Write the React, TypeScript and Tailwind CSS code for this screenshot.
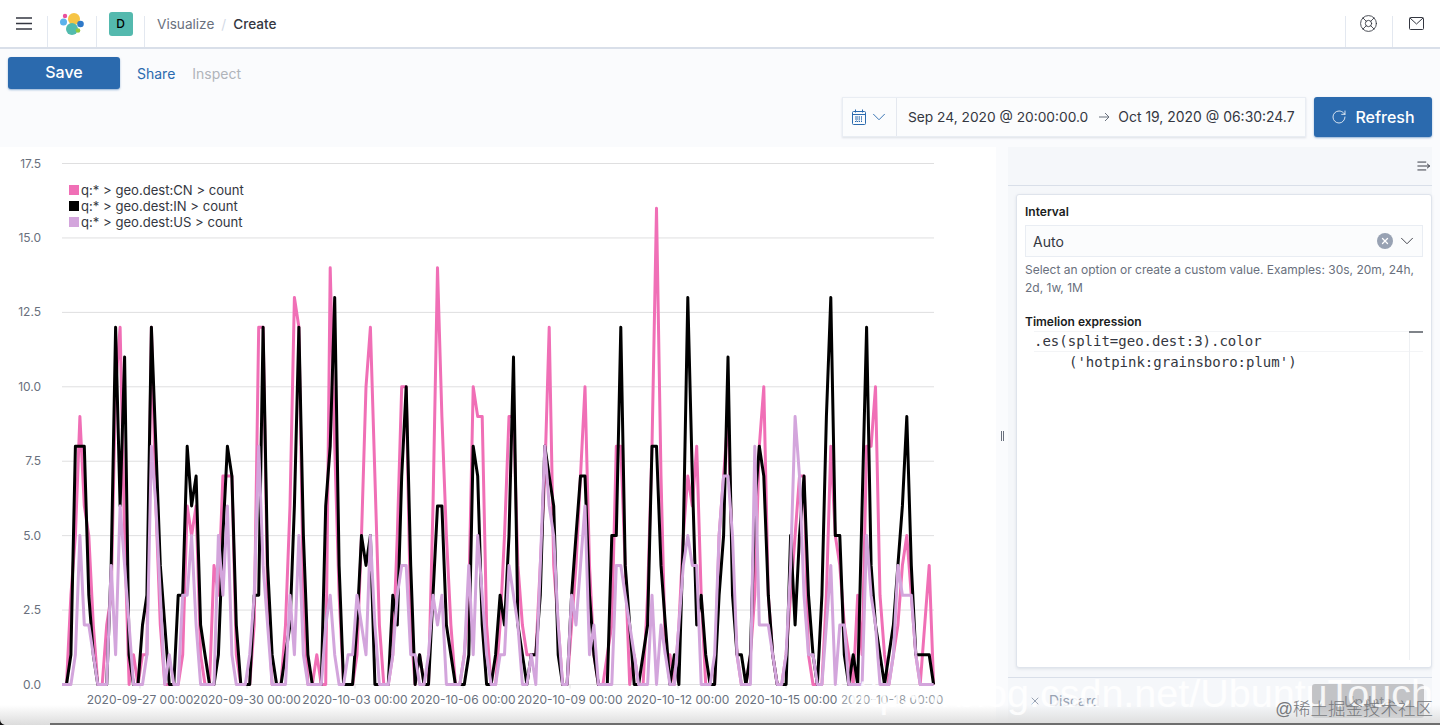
import React from 'react';
import { ChevronDown, LifeBuoy, RotateCw, X } from 'lucide-react';

const cn = [0,0,3,5,9,6,5,2,0,0, 2,3,10,12,5,0,1,0,1,1, 12,6,2,0,0,0,0,1,6,5, 6,1,0,0,4,3,7,7,7,1, 0,0,0,2,12,12,3,0,0,0, 2,6,13,12,3,0,0,1,0,0, 14,8,3,0,0,0,1,5,10,12, 7,2,0,0,1,5,10,10,2,0, 1,0,0,6,14,9,5,2,0,0, 1,3,10,9,9,2,0,0,2,5, 9,9,4,2,1,1,1,4,7,12, 4,2,0,0,2,4,7,10,4,1, 0,0,1,2,8,8,4,0,1,0, 0,3,8,16,7,1,1,0,2,5, 7,6,8,3,0,0,0,5,7,9, 4,1,0,0,1,3,8,10,3,1, 0,0,1,3,5,7,7,1,0,0, 0,3,8,5,4,2,1,0,3,1, 8,8,10,3,1,0,1,2,4,5, 3,1,0,2,4,0];
const ind = [0,0,1,8,8,8,3,1,0,0, 0,4,12,6,11,1,0,0,2,3, 12,8,4,2,0,0,3,3,8,6, 7,2,1,0,0,1,5,8,7,2, 0,0,0,3,3,12,4,1,0,0, 1,2,6,12,5,1,0,0,0,6, 8,13,4,0,0,0,2,5,4,5, 0,0,0,0,3,2,7,10,4,0, 1,0,0,3,6,6,2,1,0,0, 0,1,8,7,2,0,0,1,3,2, 5,11,2,1,0,1,1,3,8,7, 6,1,0,0,3,5,7,7,3,1, 0,0,0,5,5,12,4,2,0,0, 1,2,8,8,4,2,0,1,0,5, 13,7,2,3,1,0,0,3,5,11, 3,1,1,0,1,6,8,7,3,1, 0,0,0,5,2,5,7,3,1,0, 3,9,13,5,5,1,0,1,0,6, 12,4,2,1,0,1,2,4,6,9, 4,1,1,1,1,0];
const us = [0,0,0,1,5,2,2,1,0,0, 0,4,1,6,4,2,0,0,0,1, 8,6,3,0,1,0,0,3,3,5, 2,0,0,0,0,5,3,6,1,0, 0,0,1,3,8,4,2,0,0,0, 0,3,1,5,1,0,0,0,0,2, 3,1,0,0,1,1,3,2,1,5, 2,0,0,0,1,3,4,4,1,1, 0,0,1,3,2,3,0,0,0,0, 1,4,1,5,3,1,0,0,1,1, 4,3,2,0,0,1,0,4,8,6, 5,2,0,0,3,2,4,6,1,2, 0,0,0,0,4,4,3,2,1,0, 0,0,3,0,2,1,0,0,2,4, 5,4,4,0,0,0,1,5,7,7, 5,1,0,0,0,8,2,2,2,1, 0,0,1,4,9,7,3,1,1,0, 0,2,4,0,2,2,0,0,0,0, 5,3,2,0,0,0,1,4,3,3, 3,1,0,0,0,0];

const Y0 = 537.5;
const UNIT = 29.77;
const toPoints = (data: number[]) =>
  data.map((v, i) => `${(62 + i * 4.47).toFixed(1)},${(Y0 - v * UNIT).toFixed(1)}`).join(' ');

const yTicks = ['0.0', '2.5', '5.0', '7.5', '10.0', '12.5', '15.0', '17.5'];
const xTicks: [string, number][] = [
  ['2020-09-27 00:00', 140],
  ['2020-09-30 00:00', 247],
  ['2020-10-03 00:00', 355],
  ['2020-10-06 00:00', 463],
  ['2020-10-09 00:00', 570],
  ['2020-10-12 00:00', 678],
  ['2020-10-15 00:00', 786],
];

const Chart = () => (
  <svg width="996" height="578" viewBox="0 0 996 578" className="block">
    {yTicks.map((t, i) => {
      const y = Y0 - i * 2.5 * UNIT;
      return (
        <g key={t}>
          <line x1="62" x2="934" y1={y} y2={y} stroke="#dfdfe0" strokeWidth="1" />
          <text x="41" y={y + 4} textAnchor="end" fontSize="12" fill="#69707d">{t}</text>
        </g>
      );
    })}
    {xTicks.map(([t, x]) => (
      <g key={t}>
        <line x1={x} x2={x} y1={Y0} y2={Y0 + 4} stroke="#dfdfe0" />
        <text x={x} y={557} textAnchor="middle" fontSize="12" fill="#69707d">{t}</text>
      </g>
    ))}
    <text x="892" y="557" textAnchor="middle" fontSize="12" fill="#9a9fa8">2020-10-18 00:00</text>
    <polyline points={toPoints(cn)} fill="none" stroke="#f06fb6" strokeWidth="3" strokeLinejoin="round" />
    <polyline points={toPoints(ind)} fill="none" stroke="#000000" strokeWidth="3" strokeLinejoin="round" />
    <polyline points={toPoints(us)} fill="none" stroke="#d3a5dc" strokeWidth="3" strokeLinejoin="round" />
  </svg>
);

const legend = [
  ['bg-[#f06fb6]', 'q:* > geo.dest:CN > count'],
  ['bg-[#000000]', 'q:* > geo.dest:IN > count'],
  ['bg-[#d3a5dc]', 'q:* > geo.dest:US > count'],
];

const Logo = () => (
  <svg width="24" height="24" viewBox="0 0 24 24">
    <circle cx="14" cy="7" r="6" fill="#f6c445" />
    <circle cx="12" cy="17" r="6" fill="#52bbae" />
    <circle cx="3.5" cy="10" r="3.5" fill="#5cb2ec" />
    <circle cx="5" cy="4" r="2.2" fill="#ea4f9c" />
    <circle cx="20.5" cy="12" r="3.3" fill="#2e79c9" />
    <circle cx="18" cy="18.5" r="2.3" fill="#93c83f" />
  </svg>
);

export default function App() {
  return (
    <div className="relative h-[725px] w-[1440px] overflow-hidden bg-[#fafbfd] font-['Inter',sans-serif] text-[#343741]">
      <header className="flex h-[49px] items-stretch border-b-2 border-[#d9dfe9] bg-white">
        <div className="flex w-[47px] items-center justify-center pb-[1px]">
          <svg width="16" height="13" viewBox="0 0 16 13" stroke="#343741" strokeWidth="1.6">
            <path d="M0 1h16M0 6.5h16M0 12h16" />
          </svg>
        </div>
        <div className="mt-[16px] w-px bg-[#e3e8f0]" />
        <div className="flex w-[48px] items-center justify-center">
          <Logo />
        </div>
        <div className="mt-[16px] w-px bg-[#e3e8f0]" />
        <div className="flex w-[47px] items-center justify-center">
          <div className="flex h-[24px] w-[24px] items-center justify-center rounded-[3px] bg-[#54b9ae] text-[12px] font-medium text-black">D</div>
        </div>
        <div className="mt-[16px] w-px bg-[#e3e8f0]" />
        <div className="flex items-center pl-[12px] pt-[1px] text-[13.6px]">
          <span className="text-[#69707d]">Visualize</span>
          <span className="mx-[7px] text-[#d3dae6]">/</span>
          <span className="font-medium text-[#343741]">Create</span>
        </div>
        <div className="ml-auto mt-[16px] w-px bg-[#e3e8f0]" />
        <div className="flex w-[46px] items-center justify-center pr-[2px]">
          <LifeBuoy size={19} strokeWidth={1.1} />
        </div>
        <div className="mt-[16px] w-px bg-[#e3e8f0]" />
        <div className="flex w-[47px] items-center justify-center pb-[1px]">
          <svg width="15" height="13" viewBox="0 0 15 13" fill="none" stroke="#343741" strokeWidth="1">
            <rect x="0.5" y="0.5" width="14" height="12" rx="1" />
            <path d="M1 1l6.5 6 6.5-6" />
          </svg>
        </div>
      </header>

      <div className="flex h-[48px] items-start gap-[17px] px-[8px] pt-[8px]">
        <button className="h-[32px] w-[112px] rounded-[3px] bg-[#2b6aae] pb-[2px] text-[16px] font-medium text-white shadow-[0_1px_2px_rgba(43,106,174,0.5)]">Save</button>
        <span className="pt-[6px] text-[14px] text-[#2b6aae]">Share</span>
        <span className="pt-[6px] text-[14px] text-[#b0b4ba]">Inspect</span>
      </div>

      <div className="flex h-[50px] items-start justify-end gap-[8px] pr-[8px]">
        <div className="flex h-[40px] w-[464px] items-center border border-[#e9edf3] bg-[#fbfcfd] shadow-[0_1px_2px_rgba(152,162,179,0.3)]">
          <div className="flex h-full w-[54px] items-center justify-center gap-[2px] border-r border-[#e4e8ef] pl-[2px]">
            <svg width="14" height="16" viewBox="0 0 14 16" fill="none" stroke="#2b6aae" strokeWidth="1">
              <rect x="0.5" y="2.5" width="13" height="13" rx="1" />
              <path d="M3.5 0.5v3M10.5 0.5v3M0.5 5.5h13" />
              <path d="M3 8h8M3 10h8M3 12.5h8M4.5 7.5v6M7 7.5v6M9.5 7.5v6" strokeDasharray="1 1" />
            </svg>
            <ChevronDown size={22} strokeWidth={1} className="text-[#2b6aae]" />
          </div>
          <div className="flex items-center pl-[11px] text-[13.75px] text-[#343741]">
            <span>Sep 24, 2020 @ 20:00:00.0</span>
            <span className="ml-[10px] mr-[8px] pt-[1px] text-[#69707d]">
              <svg width="12" height="10" viewBox="0 0 12 10" fill="none" stroke="currentColor"><path d="M1 5h10M7 1l4 4-4 4" /></svg>
            </span>
            <span className="text-[13.95px]">Oct 19, 2020 @ 06:30:24.7</span>
          </div>
        </div>
        <button className="flex h-[40px] w-[118px] items-center justify-center gap-[8px] rounded-[3px] bg-[#2b6aae] text-[16px] font-medium text-white shadow-[0_1px_2px_rgba(43,106,174,0.5)]">
          <RotateCw size={16} strokeWidth={1.2} />
          Refresh
        </button>
      </div>

      <div className="flex">
        <div className="relative h-[578px] w-[996px] bg-white">
          <Chart />
          <div className="absolute left-[69px] top-[35px] text-[13.1px] leading-[16px] text-[#343741]">
            {legend.map(([c, t]) => (
              <div key={t} className="flex items-center gap-[2px]">
                <span className={`h-[10px] w-[10px] ${c}`} />
                <span>{t}</span>
              </div>
            ))}
          </div>
        </div>
        <div className="flex w-[12px] items-start justify-center pt-[284px]">
          <div className="h-[10px] w-[3px] border-x border-[#69707d]" />
        </div>
        <div className="flex h-[578px] w-[424px] flex-col bg-[#f5f7fa]">
          <div className="flex h-[39px] items-center justify-end border-b border-[#d9dfe9] pr-[1px]">
            <svg width="14" height="12" viewBox="0 0 16 12" fill="none" stroke="#343741" strokeWidth="1.1">
              <path d="M0.5 1.5h10M0.5 6h14M0.5 10.5h10M11.5 3.5l3 2.5-3 2.5" />
            </svg>
          </div>
          <div className="ml-[8px] mr-0 mt-[8px] h-[474px] w-[416px] rounded-[3px] border border-[#dfe4ec] bg-white px-[8px] pt-[10px] shadow-[0_1px_3px_rgba(152,162,179,0.25)]">
            <div className="text-[12px] font-semibold leading-[14px] text-[#1a1c21]">Interval</div>
            <div className="mt-[6px] flex h-[32px] w-[398px] items-center border border-[#e9edf3] bg-[#fbfcfd] pl-[7px] pr-[4px] text-[14px]">
              <span>Auto</span>
              <div className="ml-auto flex h-[16px] w-[16px] items-center justify-center rounded-full bg-[#98a2b3] text-white">
                <X size={10} strokeWidth={3} />
              </div>
              <ChevronDown size={22} strokeWidth={1} className="ml-[3px]" />
            </div>
            <p className="mt-[4px] w-[398px] text-[12px] leading-[18px] text-[#69707d]">
              Select an option or create a custom value. Examples: 30s, 20m, 24h, 2d, 1w, 1M
            </p>
            <div className="mt-[18px] text-[12px] font-semibold leading-[14px] text-[#1a1c21]">Timelion expression</div>
            <div className="relative mt-[2px] h-[329px] w-[398px] font-['DejaVu_Sans_Mono',monospace] text-[14px] leading-[21px] text-[#343741]">
              <div className="ml-[9px] box-border h-[21px] w-[389px] border-y border-[#f3f4f6] leading-[19px]">.es(split=geo.dest:3).color</div>
              <div className="ml-[44px]">('hotpink:grainsboro:plum')</div>
              <div className="absolute bottom-0 right-[13px] top-0 w-px bg-[#eef0f3]" />
              <div className="absolute right-0 top-0 h-[2px] w-[14px] bg-[#7f8389]" />
            </div>
          </div>
          <div className="mt-[9px] flex flex-1 items-start justify-between border-t border-[#d9dfe9] pl-[21px] pr-[8px] pt-[6px]">
            <div className="flex items-center gap-[8px] pt-[6px] text-[14px] text-[#98a2b3]">
              <X size={12} />
              Discard
            </div>
            <div className="flex h-[34px] w-[112px] items-center justify-center rounded-[3px] bg-[#c2c3c6] text-[14px] text-[#8a8c90]">Update</div>
          </div>
        </div>
      </div>

      {/* screenshot overlays: window edge and watermarks */}
      <div className="pointer-events-none absolute inset-x-0 bottom-0 h-[20px] bg-gradient-to-b from-transparent to-[#dcdcdc]" />
      <div className="pointer-events-none absolute bottom-0 left-[50px] right-0 h-[2px] bg-[#6e6e6e]" />
      <svg width="6" height="6" viewBox="0 0 6 6" className="pointer-events-none absolute bottom-0 left-0">
        <path d="M0 0C0 3.5 2.5 6 6 6H0Z" fill="#111" />
      </svg>
      <div className="pointer-events-none absolute bottom-[8px] right-[7px] whitespace-nowrap font-['Liberation_Sans',sans-serif] text-[39.5px] leading-[48px] text-white/85">https://blog.csdn.net/UbuntuTouch</div>
      <div className="pointer-events-none absolute bottom-[6px] right-[7px] whitespace-nowrap font-['Liberation_Sans','Noto_Sans_CJK_SC',sans-serif] text-[17.5px] font-light leading-[20px] text-[#77797d]">@稀土掘金技术社区</div>
    </div>
  );
}
